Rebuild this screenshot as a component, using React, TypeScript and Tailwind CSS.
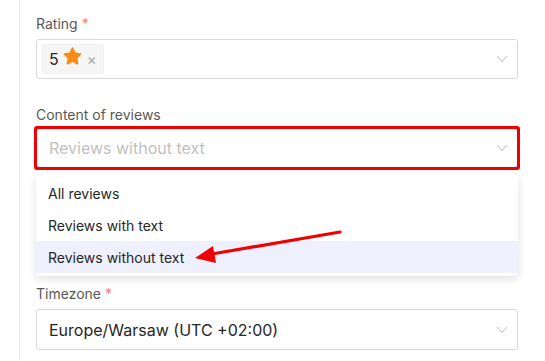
import React from "react";

function Chevron() {
  return (
    <svg width="12" height="8" viewBox="0 0 12 8" className="shrink-0">
      <polyline points="1,1 6,6.5 11,1" fill="none" stroke="#c4c4c4" strokeWidth="1.1" />
    </svg>
  );
}

function Label({ text, required }: { text: string; required?: boolean }) {
  return (
    <div className="h-[22px] leading-[22px] text-[14px] text-[#595959]">
      {text}
      {required && <span className="ml-1 text-[#ff7875]">*</span>}
    </div>
  );
}

export default function App() {
  return (
    <div
      className="relative w-[545px] h-[361px] overflow-hidden bg-white"
      style={{ fontFamily: "Inter, 'Noto Sans', sans-serif" }}
    >
      <div className="ml-[19px] h-full border-l border-[#ebebeb] pl-4 pr-[27px] pt-[13px]">
        {/* Rating */}
        <Label text="Rating" required />
        <div className="mt-[4px] flex h-[40px] items-center justify-between rounded-[3px] border border-[#d9d9d9] pl-[5px] pr-[9px]">
          <div className="flex h-[30px] items-center rounded-[2px] border border-[#f0f0f0] bg-[#f5f5f5] pl-[6px] pr-[6px]">
            <span className="text-[16px] text-[#262626]">5</span>
            <svg width="21" height="21" viewBox="0 0 24 24" className="ml-[3px] -mt-[6px]">
              <path
                d="M12 1.5c.4 0 .7.2.9.6l2.6 5.3 5.8.8c.9.1 1.2 1.2.6 1.8l-4.2 4.1 1 5.8c.2.9-.8 1.6-1.6 1.1L12 18.3 6.9 21c-.8.5-1.8-.2-1.6-1.1l1-5.8L2.1 10c-.6-.6-.3-1.7.6-1.8l5.8-.8 2.6-5.3c.2-.4.5-.6.9-.6z"
                fill="#fa8c16"
              />
            </svg>
            <span className="ml-[4px] text-[15px] leading-none text-[#a6a6a6]">×</span>
          </div>
          <Chevron />
        </div>

        {/* Content of reviews */}
        <div className="mt-[25px]">
          <Label text="Content of reviews" />
        </div>
        <div className="relative mt-[2px]">
          <div className="flex h-[40px] items-center justify-between rounded-[3px] border border-[#6b7cf0] pl-3 pr-[9px]">
            <span className="text-[16px] text-[#bfbfbf]">Reviews without text</span>
            <Chevron />
          </div>
          <div className="pointer-events-none absolute -inset-[2px] rounded-[3px] border-[3px] border-[#f00000]" />
        </div>

        {/* Dropdown */}
        <div className="mt-[6px] rounded-[4px] bg-white py-[3px] shadow-[0_3px_10px_rgba(0,0,0,0.12)]">
          <div className="flex h-[32px] items-center px-3 text-[14px] text-[#262626]">All reviews</div>
          <div className="flex h-[32px] items-center px-3 text-[14px] text-[#262626]">Reviews with text</div>
          <div className="flex h-[32px] items-center bg-[#eef0fd] px-3 text-[14px] text-[#262626]">
            Reviews without text
          </div>
        </div>

        {/* Timezone */}
        <div className="mt-[7px]">
          <Label text="Timezone" required />
        </div>
        <div className="mt-[4px] flex h-[41px] items-center justify-between rounded-[3px] border border-[#d9d9d9] pl-3 pr-[9px]">
          <span className="text-[16px] text-[#262626]">Europe/Warsaw (UTC +02:00)</span>
          <Chevron />
        </div>
      </div>

      {/* annotation arrow */}
      <svg className="pointer-events-none absolute inset-0" width="545" height="361">
        <line x1="340" y1="232" x2="212" y2="254" stroke="#f00000" strokeWidth="3.2" strokeLinecap="round" />
        <polygon points="195,258 213,246 216,263" fill="#f00000" />
      </svg>
    </div>
  );
}
